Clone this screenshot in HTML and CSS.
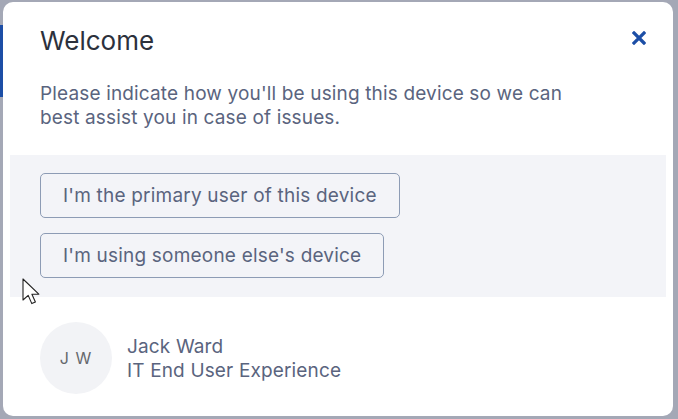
FILE: index.html
```html
<!DOCTYPE html>
<html>
<head>
<meta charset="utf-8">
<link rel="stylesheet" href="styles.css">
</head>
<body>
<div class="accent"></div>
<div class="card">
  <div class="header">
    <h1 class="title">Welcome</h1>
    <button class="close" aria-label="Close">
      <svg width="14" height="14" viewBox="0 0 14 14"><path d="M2 2 L12 12 M12 2 L2 12" stroke="#1c4ea6" stroke-width="3.2" stroke-linecap="square"/></svg>
    </button>
  </div>
  <p class="intro">Please indicate how you'll be using this device so we can best assist you in case of issues.</p>
  <div class="choices">
    <button class="choice">I'm the primary user of this device</button>
    <button class="choice">I'm using someone else's device</button>
  </div>
  <div class="contact">
    <div class="avatar">J W</div>
    <div class="info">
      <div>Jack Ward</div>
      <div>IT End User Experience</div>
    </div>
  </div>
</div>
<svg class="cursor" width="22" height="28" viewBox="0 0 22 28"><path d="M1 1 L1 22 L6.2 17.4 L9.8 25.6 L13.4 24 L9.9 16.2 L16.8 16.2 Z" fill="#fff" stroke="#222" stroke-width="1.1" stroke-linejoin="round"/></svg>
</body>
</html>
```
FILE: styles.css
```css
html, body {
  margin: 0;
  padding: 0;
}
body {
  background: #a4a8b6;
  width: 678px;
  height: 419px;
  overflow: hidden;
  position: relative;
  font-family: Inter, "Noto Sans", sans-serif;
}
.accent {
  position: absolute;
  left: 0;
  top: 25px;
  width: 4px;
  height: 72px;
  background: #1c4ea6;
}
.card {
  position: relative;
  margin: 2px 5px 0 3px;
  height: 414px;
  box-sizing: border-box;
  background: #fff;
  border-radius: 10px;
  padding: 0 7px;
  display: flex;
  flex-direction: column;
}
.header {
  display: flex;
  justify-content: space-between;
  align-items: flex-start;
  padding: 22px 20px 0 30px;
}
.title {
  margin: 0;
  font-size: 26px;
  font-weight: 400;
  line-height: 34px;
  color: #2c313c;
}
.close {
  background: none;
  border: 0;
  padding: 0;
  margin-top: 7px;
  width: 14px;
  height: 14px;
  display: flex;
}
.intro {
  margin: 24px 0 0 30px;
  width: 540px;
  font-size: 19px;
  letter-spacing: 0.15px;
  line-height: 24px;
  color: #5a647e;
}
.choices {
  margin-top: 25px;
  background: #f3f4f8;
  padding: 18px 30px 19px 30px;
  display: flex;
  flex-direction: column;
  align-items: flex-start;
  gap: 15px;
}
.choice {
  font-family: inherit;
  font-size: 19px;
  letter-spacing: 0.2px;
  color: #5a647e;
  background: transparent;
  border: 1.5px solid #8d9cb5;
  border-radius: 5px;
  height: 45px;
  padding: 0 22px;
}
.contact {
  display: flex;
  align-items: center;
  gap: 15px;
  padding: 25px 30px 0 30px;
}
.avatar {
  width: 72px;
  height: 72px;
  border-radius: 50%;
  background: #f2f3f6;
  color: #66686d;
  font-size: 16px;
  display: flex;
  align-items: center;
  justify-content: center;
  letter-spacing: 1px;
}
.info {
  font-size: 19px;
  letter-spacing: 0.15px;
  line-height: 24px;
  color: #5a647e;
  margin-top: 1px;
}
.cursor {
  position: absolute;
  left: 22px;
  top: 278px;
}
```
